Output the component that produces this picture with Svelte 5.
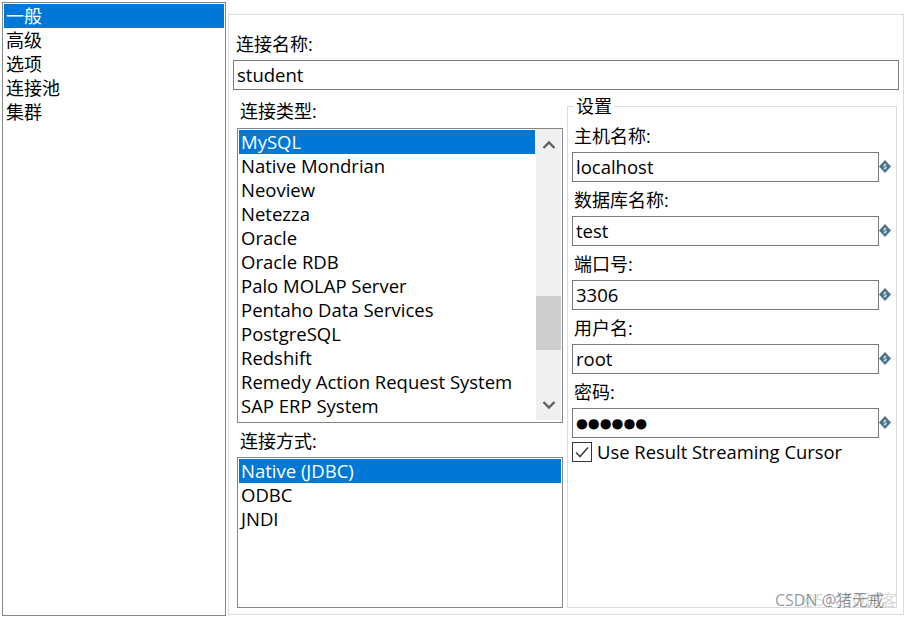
<script lang="ts">
    const categories = ['一般', '高级', '选项', '连接池', '集群'];
    const connectionTypes = [
        'MySQL',
        'Native Mondrian',
        'Neoview',
        'Netezza',
        'Oracle',
        'Oracle RDB',
        'Palo MOLAP Server',
        'Pentaho Data Services',
        'PostgreSQL',
        'Redshift',
        'Remedy Action Request System',
        'SAP ERP System'
    ];
    const accessMethods = ['Native (JDBC)', 'ODBC', 'JNDI'];
    const settings = [
        { label: '主机名称:', value: 'localhost' },
        { label: '数据库名称:', value: 'test' },
        { label: '端口号:', value: '3306' },
        { label: '用户名:', value: 'root' },
        { label: '密码:', value: '●●●●●●', secret: true }
    ];
</script>

<div class="page">
    <ul class="sidebar">
        {#each categories as item, i}
            <li class:selected={i === 0}>{item}</li>
        {/each}
    </ul>

    <section class="panel">
        <div class="label">连接名称:</div>
        <div class="textbox name">student</div>

        <div class="columns">
            <div class="left">
                <div class="label indent">连接类型:</div>
                <div class="listbox types">
                    <ul>
                        {#each connectionTypes as item, i}
                            <li class:selected={i === 0}>{item}</li>
                        {/each}
                    </ul>
                    <div class="scrollbar">
                        <svg class="arrow" width="14" height="10" viewBox="0 0 14 10">
                            <path d="M1.5 8 7 2.5 12.5 8" fill="none" stroke="#606060" stroke-width="2.4" />
                        </svg>
                        <div class="track"><div class="thumb"></div></div>
                        <svg class="arrow" width="14" height="10" viewBox="0 0 14 10">
                            <path d="M1.5 2 7 7.5 12.5 2" fill="none" stroke="#606060" stroke-width="2.4" />
                        </svg>
                    </div>
                </div>
                <div class="label indent method">连接方式:</div>
                <div class="listbox methods">
                    <ul>
                        {#each accessMethods as item, i}
                            <li class:selected={i === 0}>{item}</li>
                        {/each}
                    </ul>
                </div>
            </div>

            <fieldset class="settings">
                <legend>设置</legend>
                {#each settings as field}
                    <div class="field">
                        <div class="label">{field.label}</div>
                        <div class="input-row">
                            <div class="textbox" class:secret={field.secret}>{field.value}</div>
                            <svg class="var-icon" width="12" height="13" viewBox="0 0 12 13">
                                <path d="M6 0 12 6.5 6 13 0 6.5Z" fill="#4a7090" />
                                <path d="M7.6 5C7.2 4.2 4.6 4 4.6 5.4 4.6 6.9 7.5 6.2 7.5 7.7 7.5 9.1 4.9 8.9 4.4 8M6 3.4V9.6" fill="none" stroke="#dfe8ef" stroke-width="0.8" />
                            </svg>
                        </div>
                    </div>
                {/each}
                <div class="check-row">
                    <span class="checkbox">
                        <svg width="18" height="18" viewBox="0 0 18 18">
                            <path d="M3 9.5 7 13.5 15 4.5" fill="none" stroke="#444" stroke-width="1.6" />
                        </svg>
                    </span>
                    <span>Use Result Streaming Cursor</span>
                </div>
            </fieldset>
        </div>

        <div class="watermark">
            <span>CSDN @猪无戒</span>
            <span class="ghost">@51CTO博客</span>
        </div>
    </section>
</div>

<style>
    :global(body) {
        margin: 0;
        background: #fff;
    }

    .page {
        width: 906px;
        height: 619px;
        box-sizing: border-box;
        padding: 2px;
        display: flex;
        gap: 2px;
        align-items: flex-start;
        color: #000;
        font-family: 'Open Sans', 'Noto Sans CJK SC', sans-serif;
        font-size: 18px;
        line-height: 24px;
        overflow: hidden;
    }

    ul {
        list-style: none;
        margin: 0;
        padding: 0;
    }

    li {
        height: 24px;
        padding-left: 2px;
        white-space: nowrap;
    }

    li.selected {
        background: #0078d7;
        color: #fff;
    }

    .sidebar {
        width: 224px;
        height: 614px;
        box-sizing: border-box;
        border: 1px solid #82878c;
        padding: 1px;
    }

    .panel {
        position: relative;
        width: 676px;
        height: 601px;
        box-sizing: border-box;
        margin-top: 12px;
        border: 1px solid #dcdcdc;
        padding: 17px 4px 0;
    }

    .label {
        height: 24px;
        padding-left: 3px;
    }

    .textbox {
        height: 30px;
        box-sizing: border-box;
        border: 1px solid #7a7a7a;
        padding: 2px 3px;
        line-height: 24px;
        font-size: 18.5px;
    }

    .name {
        margin-top: 4px;
    }

    .columns {
        display: flex;
        gap: 4px;
        padding: 0 2px 0 4px;
    }

    .left {
        width: 326px;
        padding-top: 9px;
    }

    .indent {
        padding-left: 3px;
    }

    .listbox {
        box-sizing: border-box;
        border: 1px solid #82878c;
        padding: 1px;
        margin-top: 5px;
        display: flex;
        font-size: 18.5px;
    }

    .listbox ul {
        flex: 1;
    }

    .types {
        height: 295px;
    }

    .method {
        margin-top: 6px;
    }

    .methods {
        height: 151px;
        margin-top: 4px;
    }

    .scrollbar {
        width: 25px;
        margin: -1px 0 1px 1px;
        background: #f0f0f0;
        display: flex;
        flex-direction: column;
        align-items: center;
    }

    .arrow {
        flex: none;
        margin: 11px 0 10px;
    }

    .track {
        flex: 1;
        width: 100%;
    }

    .thumb {
        height: 54px;
        margin-top: 136px;
        background: #cdcdcd;
    }

    .settings {
        width: 330px;
        height: 514px;
        box-sizing: border-box;
        margin: 4px 0 0;
        border: 1px solid #dcdcdc;
        padding: 6px 4px 0;
    }

    legend {
        margin-left: 2px;
        padding: 0 2px;
        line-height: 24px;
    }

    .settings .label {
        padding-left: 2px;
    }

    .field {
        margin-bottom: 6px;
    }

    .input-row {
        margin-top: 4px;
        display: flex;
        align-items: center;
    }

    .input-row .textbox {
        width: 307px;
    }

    .secret {
        font-family: 'DejaVu Sans', sans-serif;
        font-size: 13.6px;
    }

    .var-icon {
        margin: -1px 0 0 0;
    }

    .check-row {
        display: flex;
        align-items: center;
        gap: 5px;
        height: 20px;
        margin-top: -2px;
        font-size: 18.4px;
    }

    .checkbox {
        width: 20px;
        height: 20px;
        box-sizing: border-box;
        border: 1px solid #333;
        display: flex;
    }

    .watermark {
        position: absolute;
        right: 19px;
        bottom: 3px;
        color: rgba(0, 0, 0, 0.42);
        font-size: 16px;
        line-height: 22px;
        white-space: nowrap;
    }

    .ghost {
        position: absolute;
        right: -13px;
        top: 0;
        color: rgba(0, 0, 0, 0.18);
    }
</style>
